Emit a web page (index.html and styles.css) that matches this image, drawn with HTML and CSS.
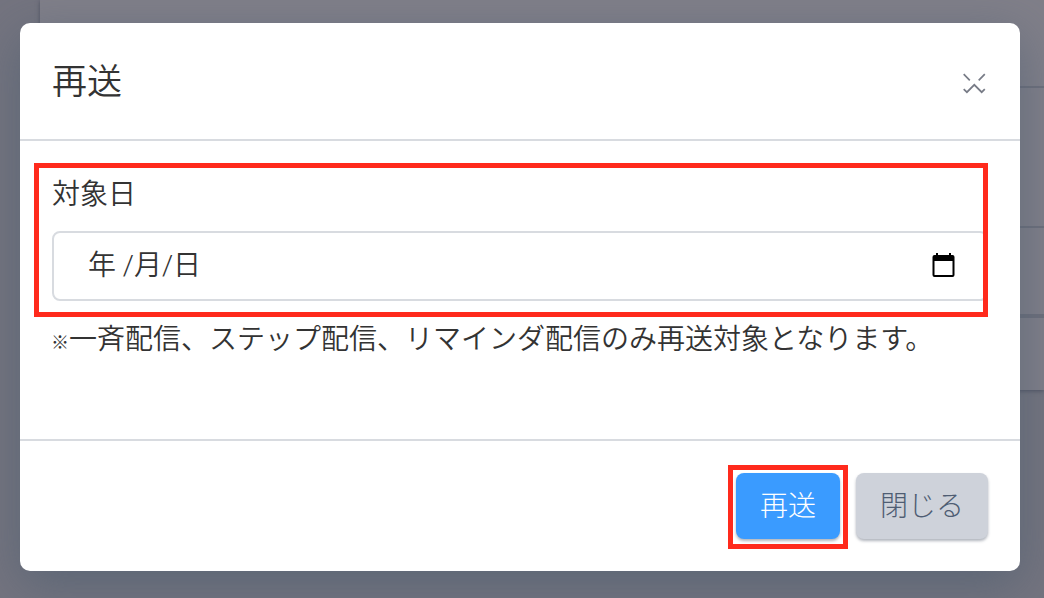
FILE: index.html
```
<!DOCTYPE html>
<html lang="ja">
<head>
    <meta charset="UTF-8">
    <meta name="viewport" content="width=device-width, initial-scale=1.0">
    <title>再送</title>
    <link rel="stylesheet" href="styles.css">
</head>
<body>
    <div class="page" aria-hidden="true">
        <div class="page-card">
            <div class="page-row row-title"></div>
            <div class="page-row row-filter"></div>
            <div class="page-row row-head"></div>
            <div class="page-row row-item"></div>
        </div>
    </div>

    <div class="overlay">
        <form class="modal" role="dialog" aria-labelledby="modal-title">
            <header class="modal-header">
                <h1 id="modal-title">再送</h1>
                <button type="button" class="close" aria-label="閉じる">
                    <svg width="24" height="24" viewBox="0 0 24 24" fill="none" stroke="#777b86" stroke-width="1.7">
                        <path d="M1.700 2.200 7.800 8.300M22.800 2.200 16.700 8.300M1.700 17.200 4.900 20.200 12.300 12.800 19.700 20.200 22.800 17.200"/>
                    </svg>
                </button>
            </header>

            <div class="modal-body">
                <div class="date-group">
                    <label for="target-date">対象日</label>
                    <div class="date-field">
                        <input type="text" id="target-date" name="target-date" value="年 /月/日">
                        <button type="button" class="picker" aria-label="カレンダー">
                            <svg width="24" height="24" viewBox="0 0 24 24">
                                <path fill="#000" fill-rule="evenodd" d="M4 0h2v2h11V0h2v2h1.500a2 2 0 0 1 2 2v18a2 2 0 0 1-2 2H2.500a2 2 0 0 1-2-2V4a2 2 0 0 1 2-2H4zM2.500 8v14h18V8z"/>
                            </svg>
                        </button>
                    </div>
                </div>
                <p class="note"><span class="mark">※</span>一斉配信、ステップ配信、リマインダ配信のみ再送対象となります。</p>
            </div>

            <footer class="modal-footer">
                <div class="highlight">
                    <button type="submit" class="btn btn-primary">再送</button>
                </div>
                <button type="button" class="btn btn-secondary">閉じる</button>
            </footer>
        </form>
    </div>
</body>
</html>
```
FILE: styles.css
```
* {
    box-sizing: border-box;
}
body {
    margin: 0;
    min-height: 100vh;
    position: relative;
    overflow: hidden;
    background-color: #74747f;
    color: #333;
    font-family: "Noto Sans CJK JP", sans-serif;
    font-size: 28px;
    font-weight: 350;
    line-height: 40px;
}
button, input {
    font: inherit;
    color: inherit;
}

/* page behind the modal */
.page {
    padding-left: 40px;
}
.page-card {
    background-color: #807f89;
    box-shadow: 0 1px 4px rgba(40, 45, 65, 0.5);
}
.page-row {
    border-bottom: 2px solid #6d6f7b;
}
.row-title {
    height: 88px;
}
.row-filter {
    height: 140px;
}
.row-head {
    height: 90px;
    border-bottom-width: 4px;
}
.row-item {
    height: 72px;
    border-bottom: 0;
}

/* modal */
.overlay {
    position: absolute;
    inset: 0;
    padding: 23px 24px 27px 20px;
}
.modal {
    background: white;
    border-radius: 10px;
    box-shadow: 0 14px 50px rgba(70, 90, 110, 0.55);
}
.modal-header {
    display: flex;
    justify-content: space-between;
    align-items: flex-start;
    padding: 30px 32px 34px;
    border-bottom: 2px solid #d8dbe0;
}
h1 {
    margin: 0;
    font-size: 35px;
    font-weight: 350;
    line-height: 52px;
}
.close, .picker {
    display: flex;
    padding: 0;
    border: none;
    background: none;
    cursor: pointer;
}
.close {
    padding: 19px 2px 0;
}
.modal-body {
    min-height: 298px;
    padding: 22px 32px 32px 14px;
}
.date-group {
    padding: 4px 0 11px 13px;
    border: 5px solid #ff2a1c;
    overflow: hidden;
}
label {
    display: block;
    margin-bottom: 19px;
}
.date-field {
    display: flex;
    align-items: center;
    height: 70px;
    margin-right: -5px;
    padding: 0 30px 2px 34px;
    border: 2px solid #d8dbe0;
    border-radius: 8px;
}
.date-field input {
    flex: 1;
    min-width: 0;
    padding: 2px 0 0;
    border: none;
    outline: none;
    background: none;
    font-family: Roboto, "Noto Sans CJK JP", sans-serif;
}
.note {
    margin: 0;
    padding: 0 0 0 17px;
}
.mark {
    font-size: 18px;
    font-weight: 700;
}
.modal-footer {
    display: flex;
    justify-content: flex-end;
    align-items: flex-start;
    gap: 8px;
    padding: 24px 32px 22px;
    border-top: 2px solid #d8dbe0;
}
.highlight {
    padding: 3px 3px 5px;
    border: 5px solid #ff2a1c;
}
.btn {
    display: block;
    height: 66px;
    padding: 0 24px 4px;
    border: none;
    border-radius: 8px;
    box-shadow: 0 2px 3px rgba(60, 70, 90, 0.4);
    font-weight: 300;
    cursor: pointer;
}
.btn-primary {
    background-color: #3a9bff;
    color: white;
}
.btn-secondary {
    margin-top: 8px;
    background-color: #ced2da;
    color: #4f5d73;
}
```
